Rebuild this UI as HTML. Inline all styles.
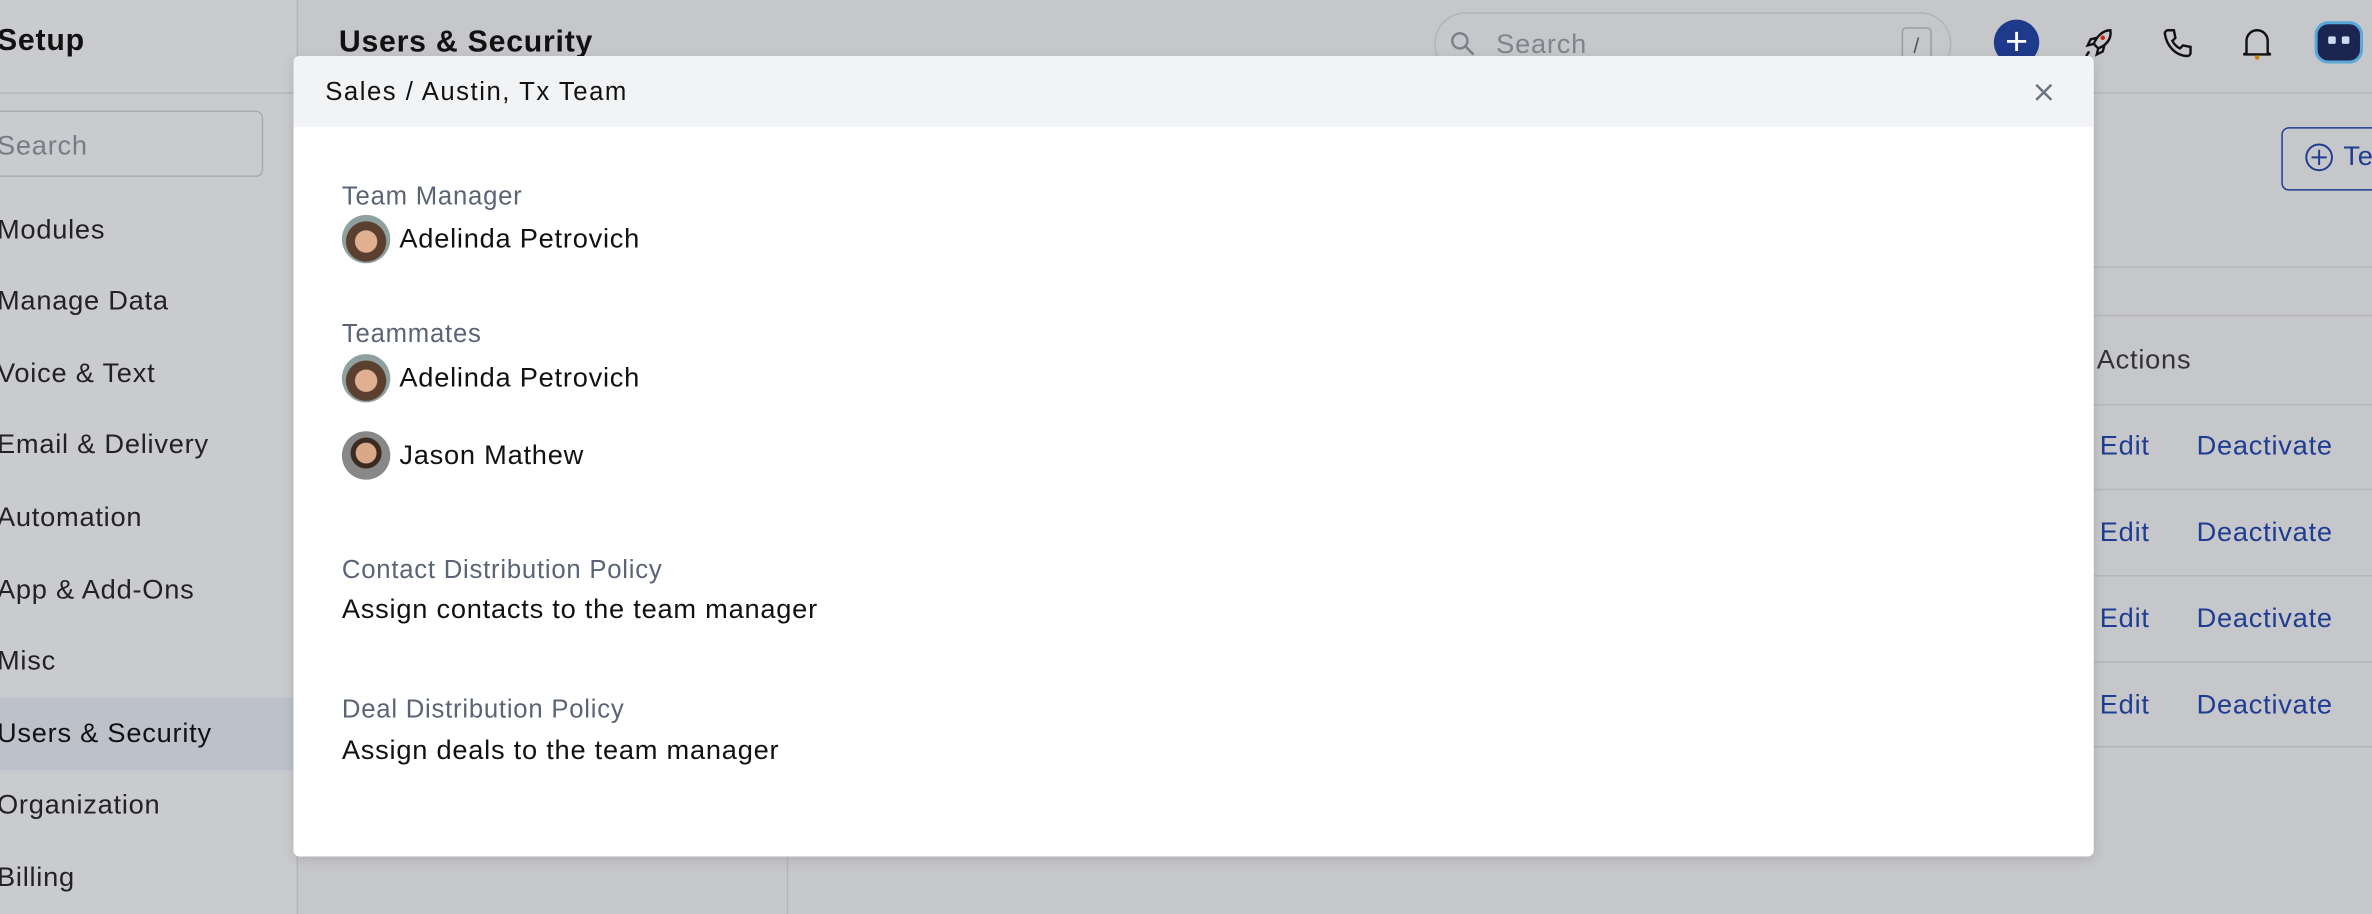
<!DOCTYPE html>
<html><head><meta charset="utf-8"><style>
html,body{margin:0;padding:0;width:2372px;height:914px;overflow:hidden;background:#c6c7ca;}
#s{position:absolute;left:0;top:0;width:1568px;height:604px;transform:scale(1.5128,1.5132);transform-origin:0 0;font-family:"Liberation Sans",sans-serif;color:#111;letter-spacing:0.5px;}
.a{position:absolute;white-space:nowrap;}
.mi{position:absolute;left:-2px;font-size:18px;color:#222;transform:translateY(-50%);}
.lk{position:absolute;font-size:18px;color:#1f3c93;transform:translateY(-50%);}
.lab{position:absolute;left:226px;font-size:17px;color:#5b6475;transform:translateY(-50%);}
.val{position:absolute;font-size:18px;color:#111;transform:translateY(-50%);}
.av{position:absolute;left:226px;width:32px;height:32px;border-radius:50%;overflow:hidden;}
</style></head><body><div id="s">
<div class="a" style="left:0;top:0;width:196px;height:604px;background:#cacbce;border-right:1px solid #b4b6ba;"></div>
<div class="a" style="left:-2px;top:16px;font-size:20px;font-weight:bold;">Setup</div>
<div class="a" style="left:0;top:61px;width:196px;height:1px;background:#b4b6ba;"></div>
<div class="a" style="left:-6px;top:73px;width:178px;height:42px;border:1px solid #a9abb0;border-radius:5px;"></div>
<div class="a" style="left:-2px;top:86px;font-size:18px;color:#777b83;">Search</div>
<div class="a" style="left:0;top:461px;width:196px;height:48px;background:#bcc1ca;"></div>
<div class="mi" style="top:152px">Modules</div>
<div class="mi" style="top:199px">Manage Data</div>
<div class="mi" style="top:247px">Voice &amp; Text</div>
<div class="mi" style="top:294px">Email &amp; Delivery</div>
<div class="mi" style="top:342px">Automation</div>
<div class="mi" style="top:390px">App &amp; Add-Ons</div>
<div class="mi" style="top:437px">Misc</div>
<div class="mi" style="top:485px;color:#111">Users &amp; Security</div>
<div class="mi" style="top:532px">Organization</div>
<div class="mi" style="top:580px">Billing</div>
<div class="a" style="left:224px;top:17px;font-size:20px;font-weight:bold;">Users &amp; Security</div>
<div class="a" style="left:948px;top:8px;width:340px;height:40px;border:1px solid #b2b4b8;border-radius:21px;"></div>
<svg class="a" style="left:958px;top:20px" width="18" height="18" viewBox="0 0 18 18" fill="none" stroke="#7a7e86" stroke-width="1.6"><circle cx="7" cy="7" r="5"/><path d="M11 11l5 5"/></svg>
<div class="a" style="left:989px;top:19px;font-size:18px;color:#80848b;">Search</div>
<div class="a" style="left:1257px;top:18px;width:18px;height:22px;border:1px solid #9a9da3;border-radius:3px;font-size:14px;text-align:center;line-height:22px;color:#555;">/</div>
<div class="a" style="left:1318px;top:13px;width:30px;height:30px;border-radius:50%;background:#1e3a8a;color:#fff;font-size:26px;line-height:28px;text-align:center;letter-spacing:0;">+</div>
<svg class="a" style="left:1375px;top:17px" width="24" height="24" viewBox="0 0 24 24" fill="none" stroke="#111" stroke-width="1.6"><path d="M20 3c-5 0-9 4-11 9l3 3c5-2 9-6 8-12z"/><circle cx="15" cy="8" r="1.5" fill="#c22" stroke="none"/><path d="M9 12l-4 1 2-4 4-1M12 15l-1 4 4-2 1-4M6 17l-2 3"/></svg>
<svg class="a" style="left:1428px;top:17px" width="24" height="24" viewBox="0 0 24 24" fill="none" stroke="#111" stroke-width="1.6"><path d="M5 3l4 0 1 5-2 2c1 2 3 4 5 5l2-2 5 1v4c0 1-1 2-2 2C10 20 4 13 3 5c0-1 1-2 2-2z"/></svg>
<svg class="a" style="left:1481px;top:16px" width="22" height="26" viewBox="0 0 22 26" fill="none" stroke="#111" stroke-width="1.6"><path d="M4 19V11a7 7 0 0 1 14 0v8l2 1H2z"/><circle cx="11" cy="22" r="1.5" fill="#c80" stroke="none"/></svg>
<div class="a" style="left:1530px;top:14px;width:32px;height:28px;border-radius:9px;background:#1b2550;border:2px solid #5aa7d8;box-sizing:border-box;"></div>
<div class="a" style="left:1539px;top:24px;width:5px;height:5px;background:#cde;border-radius:1px"></div>
<div class="a" style="left:1548px;top:24px;width:5px;height:5px;background:#cde;border-radius:1px"></div>
<div class="a" style="left:196px;top:61px;width:1372px;height:1px;background:#b4b6ba;"></div>
<div class="a" style="left:1508px;top:84px;width:70px;height:40px;border:1.5px solid #1f3c93;border-radius:5px;"></div>
<svg class="a" style="left:1523px;top:94px" width="20" height="20" viewBox="0 0 20 20" fill="none" stroke="#1f3c93" stroke-width="1.3"><circle cx="10" cy="10" r="8.5"/><path d="M10 5v10M5 10h10"/></svg>
<div class="a" style="left:1549px;top:93px;font-size:18px;color:#1f3c93;">Te</div>
<div class="a" style="left:520px;top:176px;width:1048px;height:1px;background:#b4b6ba;"></div>
<div class="a" style="left:520px;top:208px;width:1048px;height:1px;background:#b4b6ba;"></div>
<div class="a" style="left:520px;top:267px;width:1048px;height:1px;background:#b4b6ba;"></div>
<div class="a" style="left:520px;top:323px;width:1048px;height:1px;background:#b4b6ba;"></div>
<div class="a" style="left:520px;top:380px;width:1048px;height:1px;background:#b4b6ba;"></div>
<div class="a" style="left:520px;top:437px;width:1048px;height:1px;background:#b4b6ba;"></div>
<div class="a" style="left:520px;top:493px;width:1048px;height:1px;background:#b4b6ba;"></div>
<div class="a" style="left:520px;top:540px;width:1px;height:64px;background:#b4b6ba;"></div>
<div class="lk" style="left:1386px;top:238px;color:#333">Actions</div>
<div class="lk" style="left:1388px;top:295px">Edit</div><div class="lk" style="left:1452px;top:295px">Deactivate</div>
<div class="lk" style="left:1388px;top:352px">Edit</div><div class="lk" style="left:1452px;top:352px">Deactivate</div>
<div class="lk" style="left:1388px;top:409px">Edit</div><div class="lk" style="left:1452px;top:409px">Deactivate</div>
<div class="lk" style="left:1388px;top:466px">Edit</div><div class="lk" style="left:1452px;top:466px">Deactivate</div>
<div class="a" style="left:194px;top:37px;width:1190px;height:529px;background:#fff;border-radius:4px;overflow:hidden;box-shadow:0 2px 8px rgba(0,0,0,.12);">
<div style="height:47px;background:#f2f3f5;"></div></div>
<div class="a" style="left:215px;top:51px;font-size:17px;color:#111;letter-spacing:1px;">Sales / Austin, Tx Team</div>
<svg class="a" style="left:1345px;top:55px" width="12" height="12" viewBox="0 0 12 12" stroke="#6b7280" stroke-width="1.6"><path d="M1 1l10 10M11 1L1 11"/></svg>
<div class="lab" style="top:130px">Team Manager</div>
<div class="av" style="top:142px;background:radial-gradient(circle at 50% 55%,#e0b090 0 30%,#5b4030 32% 55%,#8fa0a0 57%);"></div>
<div class="val" style="left:264px;top:158px">Adelinda Petrovich</div>
<div class="lab" style="top:221px">Teammates</div>
<div class="av" style="top:234px;background:radial-gradient(circle at 50% 55%,#e0b090 0 30%,#5b4030 32% 55%,#8fa0a0 57%);"></div>
<div class="val" style="left:264px;top:250px">Adelinda Petrovich</div>
<div class="av" style="top:285px;background:radial-gradient(circle at 50% 45%,#d8a888 0 28%,#3a2a20 30% 42%,#888 44%);"></div>
<div class="val" style="left:264px;top:301px">Jason Mathew</div>
<div class="lab" style="top:377px">Contact Distribution Policy</div>
<div class="val" style="left:226px;top:403px">Assign contacts to the team manager</div>
<div class="lab" style="top:469px">Deal Distribution Policy</div>
<div class="val" style="left:226px;top:496px">Assign deals to the team manager</div>
</div></body></html>
